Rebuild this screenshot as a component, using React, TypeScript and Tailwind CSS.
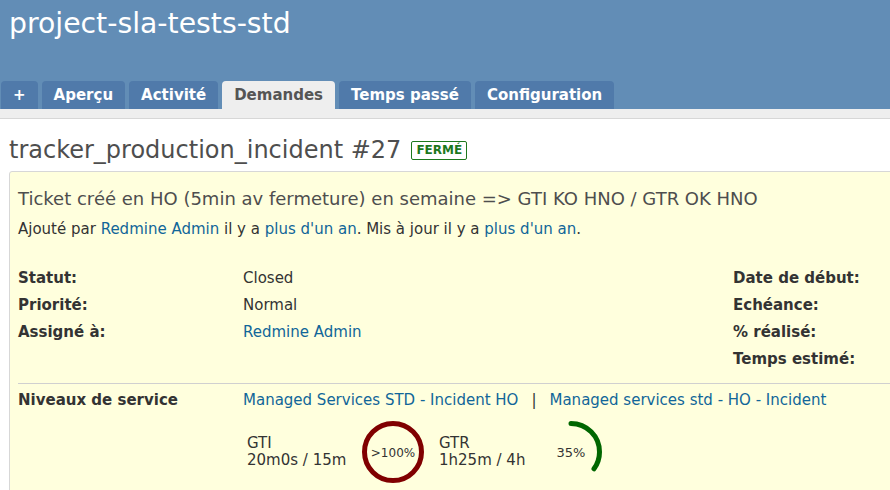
import React from "react";

const tabs = ["+", "Aperçu", "Activité", "Demandes", "Temps passé", "Configuration"];

function Ring({ pct, color, label, full, size }: { pct: number; color: string; label: string; full?: boolean; size: number }) {
  const r = 28.5;
  const c = 2 * Math.PI * r;
  return (
    <svg width="64" height="64" viewBox="0 0 64 64" className="shrink-0">
      {full ? (
        <circle cx="32" cy="32" r={r} fill="none" stroke={color} strokeWidth="5" />
      ) : (
        <circle
          cx="32"
          cy="32"
          r={r}
          fill="none"
          stroke={color}
          strokeWidth="5"
          strokeLinecap="round"
          strokeDasharray={`${(c * pct) / 100} ${c}`}
          transform="rotate(-90 32 32)"
        />
      )}
      <text x="32" y="36.5" textAnchor="middle" fontSize={size} fill="#333" fontFamily="DejaVu Sans, Verdana, sans-serif">
        {label}
      </text>
    </svg>
  );
}

export default function App() {
  return (
    <div className="w-[890px] h-[490px] overflow-hidden bg-white font-['DejaVu_Sans',Verdana,sans-serif] text-[#333]">
      <div className="bg-[#628db6] h-[109px] flex flex-col justify-between">
        <h1 className="text-white text-[28.3px] leading-[32px] font-normal pl-[9px] mt-[8px]">project-sla-tests-std</h1>
        <div className="flex gap-[4px] pl-[1px]">
          {tabs.map((t) => (
            <div
              key={t}
              className={
                "h-[28px] px-[12px] rounded-t-[4px] text-[15px] font-bold leading-[28px] " +
                (t === "Demandes" ? "bg-[#eeeeee] text-[#555]" : "bg-[#507aaa] text-white")
              }
            >
              {t}
            </div>
          ))}
        </div>
      </div>
      <div className="h-[10px] bg-[#eeeeee] border-b border-[#d7d7d7]" />
      <div className="pl-[9px]">
        <div className="flex items-center gap-[10px] mt-[17px] h-[28px]">
          <h2 className="text-[24px] leading-[28px] text-[#4e4e4e] font-normal">tracker_production_incident #27</h2>
          <span className="border border-[#1d781d] text-[#1d781d] rounded-[2px] px-[4px] text-[12px] font-bold leading-[17px]">
            FERMÉ
          </span>
        </div>
        <div className="mt-[7px] w-[1000px] h-[400px] bg-[#ffffdd] border border-[#d7d7d7] rounded-tl-[3px] pl-[8px] pt-[16px]">
          <h3 className="text-[18px] leading-[22px] text-[#4e4e4e] font-normal">
            Ticket créé en HO (5min av fermeture) en semaine =&gt; GTI KO HNO / GTR OK HNO
          </h3>
          <p className="mt-[10px] text-[15px] leading-[18px]">
            Ajouté par <span className="text-[#116699]">Redmine Admin</span> il y a{" "}
            <span className="text-[#116699]">plus d'un an</span>. Mis à jour il y a{" "}
            <span className="text-[#116699]">plus d'un an</span>.
          </p>
          <div className="mt-[27px] grid grid-cols-[225px_490px_200px] text-[15px] leading-[27px]">
            <div className="font-bold">Statut:</div>
            <div>Closed</div>
            <div className="font-bold">Date de début:</div>
            <div className="font-bold">Priorité:</div>
            <div>Normal</div>
            <div className="font-bold">Echéance:</div>
            <div className="font-bold">Assigné à:</div>
            <div className="text-[#116699]">Redmine Admin</div>
            <div className="font-bold">% réalisé:</div>
            <div />
            <div />
            <div className="font-bold">Temps estimé:</div>
          </div>
          <div className="mt-[10px] border-t border-[#d0d0d0]" />
          <div className="mt-[7px] flex text-[15px] leading-[19px]">
            <div className="w-[225px] font-bold">Niveaux de service</div>
            <div>
              <span className="text-[#116699]">Managed Services STD - Incident HO</span>
              <span className="mx-[13px]">|</span>
              <span className="text-[#116699]">Managed services std - HO - Incident</span>
            </div>
          </div>
          <div className="mt-[10px] pl-[229px] flex items-center text-[15px] leading-[17px]">
            <div className="w-[114px]">
              <div>GTI</div>
              <div>20m0s / 15m</div>
            </div>
            <Ring pct={100} color="#800000" label=">100%" full size={12} />
            <div className="ml-[14px] w-[100px]">
              <div>GTR</div>
              <div>1h25m / 4h</div>
            </div>
            <Ring pct={35} color="#006600" label="35%" size={13} />
          </div>
        </div>
      </div>
    </div>
  );
}
